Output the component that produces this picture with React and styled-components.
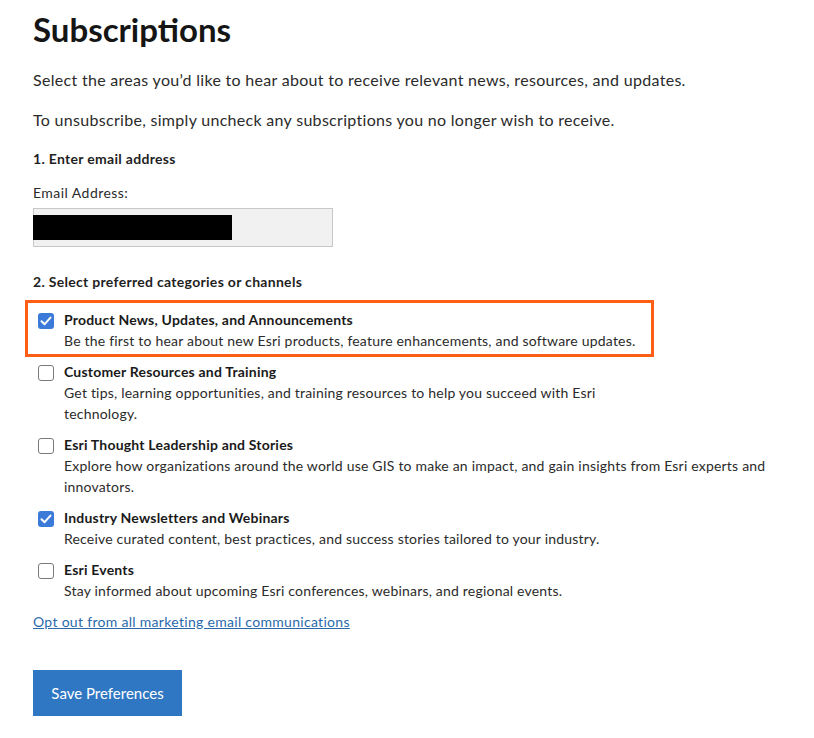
import React from "react";
import styled, { createGlobalStyle } from "styled-components";

const Global = createGlobalStyle`
  html, body { margin: 0; padding: 0; background: #fff; }
  body { font-family: Lato, "Noto Sans", sans-serif; color: #1f1f1f; }
`;

const Page = styled.main`
  padding: 9px 0 22px 33px;
  width: 760px;
`;

const Heading = styled.h1`
  margin: 0;
  font-size: 33px;
  line-height: 40px;
  font-weight: 700;
  color: #151515;
`;

const Lead = styled.p`
  margin: ${(p) => (p.$first ? "20px" : "18px")} 0 0;
  font-size: 16px;
  line-height: 22px;
  letter-spacing: 0.3px;
  color: #2b2b2b;
`;

const StepLabel = styled.h2`
  margin: ${(p) => p.$top}px 0 0;
  font-size: 14px;
  line-height: 20px;
  font-weight: 700;
  letter-spacing: 0.3px;
  color: #1f1f1f;
`;

const FieldLabel = styled.label`
  display: block;
  margin-top: 14px;
  font-size: 14px;
  line-height: 20px;
  letter-spacing: 0.45px;
  color: #2b2b2b;
`;

const EmailBox = styled.div`
  margin-top: 5px;
  width: 300px;
  height: 39px;
  box-sizing: border-box;
  background: #f1f1f1;
  border: 1px solid #c8c8c8;
  display: flex;
  align-items: center;
`;

const Redaction = styled.span`
  display: block;
  width: 199px;
  height: 25px;
  margin-left: -1px;
  background: #000;
`;

const List = styled.div`
  margin-top: 17px;
  display: flex;
  flex-direction: column;
  gap: 10px;
`;

/* orange frame drawn around the first category */
const Highlight = styled.div`
  position: relative;
  &::after {
    content: "";
    position: absolute;
    top: -9px;
    left: -8px;
    width: 629px;
    height: 57px;
    box-sizing: border-box;
    border: 3px solid #ff5f14;
    pointer-events: none;
  }
`;

const Item = styled.label`
  display: grid;
  grid-template-columns: 16px 1fr;
  column-gap: 10px;
  padding-left: 5px;
  max-width: ${(p) => (p.$narrow ? "575px" : "745px")};
  font-size: 14px;
  line-height: 21px;
  letter-spacing: 0.2px;
`;

const Box = styled.span`
  width: 16px;
  height: 16px;
  box-sizing: border-box;
  margin-top: 4px;
  border-radius: 3px;
  border: ${(p) => (p.$checked ? "none" : "1px solid #7a7a7a")};
  background: ${(p) => (p.$checked ? "#3b7ad8" : "#fff")};
  display: flex;
  align-items: center;
  justify-content: center;
`;

const Title = styled.span`
  font-weight: 700;
  color: #1a1a1a;
`;

const Desc = styled.span`
  grid-column: 2;
  color: #2b2b2b;
`;

const OptOut = styled.a`
  display: inline-block;
  margin-top: 11px;
  font-size: 14px;
  line-height: 20px;
  letter-spacing: 0.3px;
  color: #2a6aab;
  text-decoration: underline;
`;

const SaveButton = styled.button`
  display: block;
  margin-top: 38px;
  width: 149px;
  height: 46px;
  border: none;
  background: #2f77c2;
  color: #fff;
  font-family: inherit;
  font-size: 15px;
  cursor: pointer;
`;

const Check = () => (
  <svg width="12" height="10" viewBox="0 0 12 10" aria-hidden="true">
    <path d="M1.5 5.2 L4.6 8.2 L10.5 1.6" fill="none" stroke="#fff" strokeWidth="2" strokeLinecap="round" strokeLinejoin="round" />
  </svg>
);

const categories = [
  {
    title: "Product News, Updates, and Announcements",
    desc: "Be the first to hear about new Esri products, feature enhancements, and software updates.",
    checked: true,
    highlighted: true,
  },
  {
    title: "Customer Resources and Training",
    desc: "Get tips, learning opportunities, and training resources to help you succeed with Esri technology.",
    checked: false,
    narrow: true,
  },
  {
    title: "Esri Thought Leadership and Stories",
    desc: "Explore how organizations around the world use GIS to make an impact, and gain insights from Esri experts and innovators.",
    checked: false,
  },
  {
    title: "Industry Newsletters and Webinars",
    desc: "Receive curated content, best practices, and success stories tailored to your industry.",
    checked: true,
  },
  {
    title: "Esri Events",
    desc: "Stay informed about upcoming Esri conferences, webinars, and regional events.",
    checked: false,
  },
];

function Category({ title, desc, checked, narrow }) {
  return (
    <Item $narrow={narrow}>
      <Box $checked={checked}>{checked && <Check />}</Box>
      <Title>{title}</Title>
      <Desc>{desc}</Desc>
    </Item>
  );
}

export default function App() {
  return (
    <>
      <Global />
      <Page>
        <Heading>Subscriptions</Heading>
        <Lead $first>Select the areas you’d like to hear about to receive relevant news, resources, and updates.</Lead>
        <Lead>To unsubscribe, simply uncheck any subscriptions you no longer wish to receive.</Lead>
        <StepLabel $top={18}>1. Enter email address</StepLabel>
        <FieldLabel>Email Address:</FieldLabel>
        <EmailBox>
          <Redaction />
        </EmailBox>
        <StepLabel $top={25}>2. Select preferred categories or channels</StepLabel>
        <List>
          {categories.map((c) =>
            c.highlighted ? (
              <Highlight key={c.title}>
                <Category {...c} />
              </Highlight>
            ) : (
              <Category key={c.title} {...c} />
            )
          )}
        </List>
        <div>
          <OptOut href="#">Opt out from all marketing email communications</OptOut>
        </div>
        <SaveButton type="button">Save Preferences</SaveButton>
      </Page>
    </>
  );
}
